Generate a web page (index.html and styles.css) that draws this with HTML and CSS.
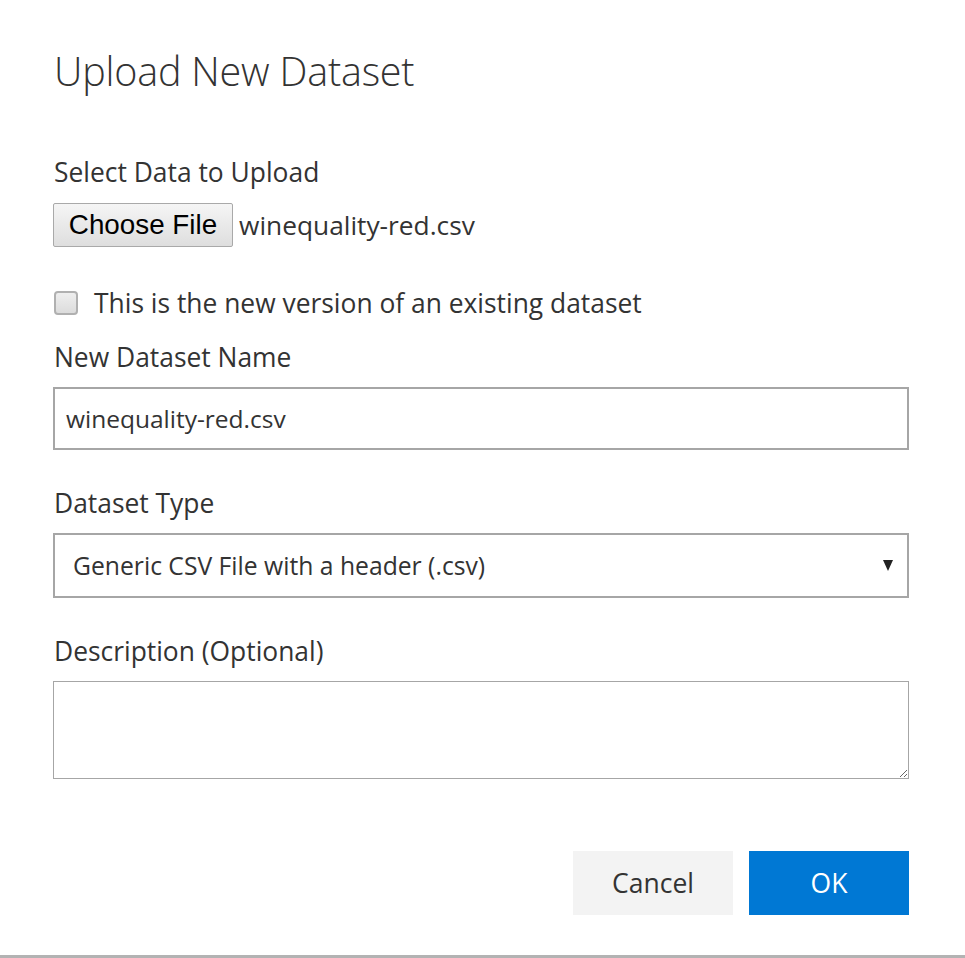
FILE: index.html
```html
<!DOCTYPE html>
<html lang="en">
<head>
<meta charset="utf-8">
<title>Upload New Dataset</title>
<link rel="stylesheet" href="styles.css">
</head>
<body>
<div class="dialog">
  <h1 class="title">Upload New Dataset</h1>

  <div class="field">
    <div class="label">Select Data to Upload</div>
    <div class="file-row">
      <span class="file-btn">Choose File</span>
      <span class="file-name">winequality-red.csv</span>
    </div>
  </div>

  <label class="check-row">
    <span class="checkbox"></span>
    <span class="check-label">This is the new version of an existing dataset</span>
  </label>

  <div class="field">
    <div class="label">New Dataset Name</div>
    <div class="text-input">winequality-red.csv</div>
  </div>

  <div class="field">
    <div class="label">Dataset Type</div>
    <div class="select">
      <span class="select-value">Generic CSV File with a header (.csv)</span>
      <span class="arrow"></span>
    </div>
  </div>

  <div class="field">
    <div class="label">Description (Optional)</div>
    <textarea class="textarea"></textarea>
  </div>

  <div class="actions">
    <button class="btn btn-cancel">Cancel</button>
    <button class="btn btn-ok">OK</button>
  </div>
</div>
<div class="bottom-line"></div>
</body>
</html>
```

FILE: styles.css
```css
html, body {
  margin: 0;
  padding: 0;
  background: #ffffff;
}
body {
  width: 965px;
  height: 958px;
  position: relative;
  overflow: hidden;
  font-family: "Open Sans", "Noto Sans", sans-serif;
  color: #333333;
}
.dialog {
  padding: 0 56px 0 53px;
  display: flex;
  flex-direction: column;
}
.title {
  margin: 45px 0 0 1px;
  font-weight: 300;
  font-size: 39.5px;
  line-height: 52px;
  color: #333333;
  letter-spacing: -0.2px;
}
.field {
  display: flex;
  flex-direction: column;
}
.label {
  font-size: 26.4px;
  line-height: 32px;
  margin-left: 1px;
  color: #333333;
}
.field:nth-of-type(1) { margin-top: 59px; }
.file-row {
  display: flex;
  align-items: center;
  margin-top: 15px;
}
.file-btn {
  box-sizing: border-box;
  width: 180px;
  height: 44px;
  display: flex;
  align-items: center;
  justify-content: center;
  border: 1px solid #a9a9a9;
  border-radius: 2px;
  background: linear-gradient(#f5f5f5, #dedede);
  font-family: "Liberation Sans", Arial, sans-serif;
  font-size: 27.8px;
  color: #000000;
}
.file-name {
  margin-left: 6px;
  font-size: 26.3px;
  color: #333333;
}
.check-row {
  display: flex;
  align-items: center;
  margin-top: 40px;
}
.checkbox {
  box-sizing: border-box;
  width: 24px;
  height: 24px;
  margin-left: 1px;
  border: 2px solid #b0b0b0;
  border-radius: 4px;
  background: linear-gradient(#eeeeee, #dcdcdc);
}
.check-label {
  margin-left: 16px;
  font-size: 26.4px;
  line-height: 32px;
}
.check-row + .field { margin-top: 22px; }
.text-input {
  box-sizing: border-box;
  margin-top: 14px;
  height: 63px;
  border: 2px solid #a6a6a6;
  padding: 0 11px;
  display: flex;
  align-items: center;
  font-size: 24.5px;
  color: #333333;
}
.field + .field { margin-top: 37px; }
.select {
  box-sizing: border-box;
  margin-top: 14px;
  height: 65px;
  border: 2px solid #a6a6a6;
  padding: 0 14px 0 18px;
  display: flex;
  align-items: center;
  justify-content: space-between;
  font-size: 24.7px;
}
.arrow {
  width: 0;
  height: 0;
  border-left: 5px solid transparent;
  border-right: 5px solid transparent;
  border-top: 11px solid #222222;
}
.textarea {
  box-sizing: border-box;
  margin-top: 14px;
  height: 98px;
  border: 1px solid #a6a6a6;
  border-radius: 0;
  outline: none;
  resize: both;
  font-family: inherit;
  font-size: 23px;
}
.actions {
  display: flex;
  justify-content: flex-end;
  gap: 16px;
  margin-top: 72px;
}
.btn {
  width: 160px;
  height: 64px;
  border: none;
  border-radius: 0;
  font-family: "Open Sans", "Noto Sans", sans-serif;
  font-size: 26.5px;
  cursor: pointer;
}
.btn-cancel {
  background: #f3f3f3;
  color: #333333;
}
.btn-ok {
  background: #0078d4;
  color: #ffffff;
}
.bottom-line {
  position: absolute;
  left: 0;
  right: 0;
  bottom: 0;
  height: 3px;
  background: #b3b3b3;
}
```
